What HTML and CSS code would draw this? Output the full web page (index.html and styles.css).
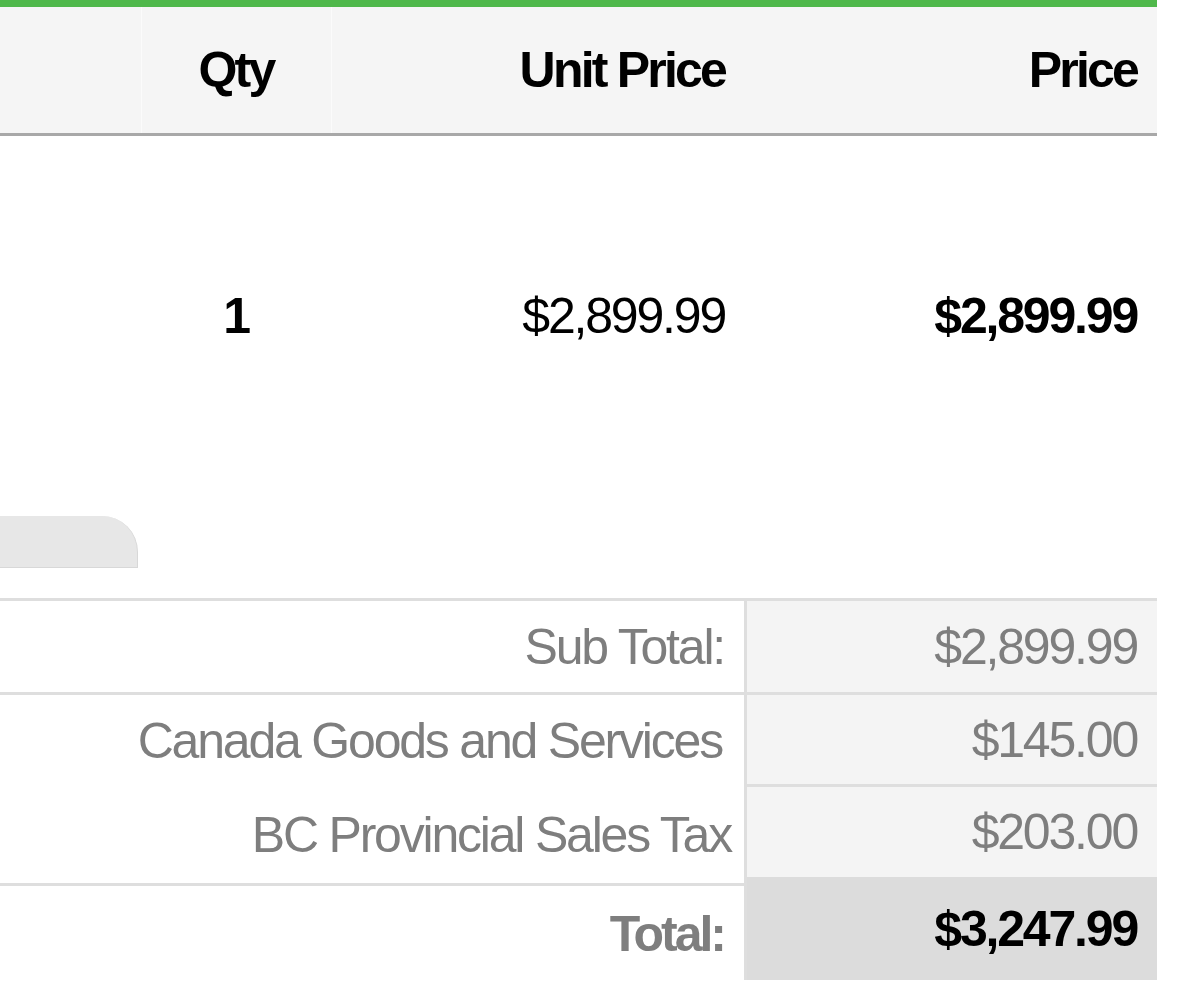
FILE: index.html
```html
<!DOCTYPE html>
<html lang="en">
<head>
<meta charset="UTF-8">
<meta name="viewport" content="width=device-width, initial-scale=1.0">
<title>Invoice</title>
<link rel="stylesheet" href="styles.css">
</head>
<body>

<div class="invoice">
    <table class="items">
        <colgroup>
            <col class="c-item">
            <col class="c-qty">
            <col class="c-unit">
            <col class="c-price">
        </colgroup>
        <thead>
            <tr>
                <th></th>
                <th class="center">Qty</th>
                <th>Unit Price</th>
                <th>Price</th>
            </tr>
        </thead>
        <tbody>
            <tr>
                <td></td>
                <td class="center bold">1</td>
                <td>$2,899.99</td>
                <td class="bold">$2,899.99</td>
            </tr>
        </tbody>
    </table>

    <div class="tab"></div>

    <div class="totals">
        <div class="labels">
            <div class="row line">Sub Total:</div>
            <div class="taxes line">
                <div class="row gst">Canada Goods and Services</div>
                <div class="row pst">BC Provincial Sales Tax</div>
            </div>
            <div class="row grand bold">Total:</div>
        </div>
        <div class="values">
            <div class="row sub line">$2,899.99</div>
            <div class="row gst line">$145.00</div>
            <div class="row pst">$203.00</div>
            <div class="row grand bold">$3,247.99</div>
        </div>
    </div>
</div>

</body>
</html>
```

FILE: styles.css
```css
body { margin: 0; background: #fff; font-family: "Liberation Sans", Arial, sans-serif; color: #000; }
.invoice { width: 1157px; }

.items { width: 1157px; border-collapse: collapse; table-layout: fixed; border-top: 7px solid #4fb84b; }
.c-item { width: 141px; }
.c-qty { width: 190px; }
.c-unit { width: 414px; }
.c-price { width: 412px; }
.items th { background: #f5f5f5; height: 126px; padding: 0 20px; font-size: 50px; font-weight: bold; letter-spacing: -2.8px; text-align: right; border-bottom: 3px solid #a8a8a8; }
.items th.center { border-left: 1px solid #fbfbfb; border-right: 1px solid #fbfbfb; }
.items td { height: 360px; padding: 0 20px; font-size: 50px; letter-spacing: -2.2px; text-align: right; }
.items .center { text-align: center; }
.bold { font-weight: bold; }

.tab { width: 137px; height: 51px; margin: 20px 0 30px; background: #e7e7e7; border-right: 1px solid #d8d8d8; border-bottom: 1px solid #d8d8d8; border-top-right-radius: 36px; }

.totals { display: flex; align-items: flex-start; font-size: 50px; letter-spacing: -2.2px; color: #7e7e7e; }
.totals .row { display: flex; align-items: center; justify-content: flex-end; padding-right: 20px; }
.labels { width: 744px; border-top: 3px solid #dedede; }
.values { width: 410px; border-top: 3px solid #dedede; border-left: 3px solid #dedede; }
.line { border-bottom: 3px solid #dedede; }

.labels .row:first-child { height: 91px; }
.labels .gst { height: 89px; padding-right: 22px; }
.labels .pst { height: 97px; padding-right: 13px; }
.labels .grand { height: 96px; letter-spacing: -3px; }

.values .row { background: #f4f4f4; }
.values .sub { height: 91px; }
.values .gst { height: 89px; }
.values .pst { height: 90px; }
.values .grand { height: 103px; background: #dcdcdc; color: #000; letter-spacing: -2.2px; }
```
